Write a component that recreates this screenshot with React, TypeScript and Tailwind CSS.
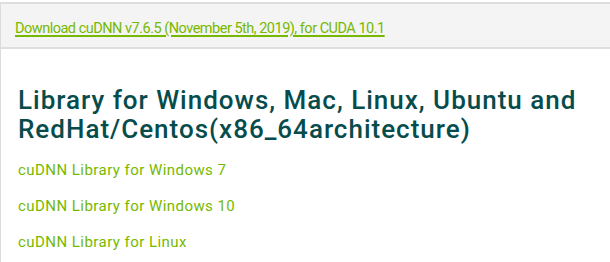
import React from "react";

export default function App() {
  return (
    <div className="w-[610px] h-[262px] overflow-hidden bg-white pt-[2px]" style={{ fontFamily: "Roboto, 'Liberation Sans', sans-serif" }}>
      <div className="border-l border-[#dcdcdc] h-full">
        <div className="bg-[#f4f4f4] border-y-2 border-[#dedede] h-[47px] pl-[14px] pt-[12px]">
          <a href="#" className="text-[14.5px] leading-[20px] tracking-[-0.5px] text-[#76b900] underline decoration-[#76b900] underline-offset-[2px] decoration-[1.5px]">
            Download cuDNN v7.6.5 (November 5th, 2019), for CUDA 10.1
          </a>
        </div>
        <div className="pl-[17px] pt-[37px]">
          <h2 className="text-[26px] leading-[29px] tracking-[1px] font-medium text-[#074c4c]">
            Library for Windows, Mac, Linux, Ubuntu and
            <br />
            RedHat/Centos(x86_64architecture)
          </h2>
          <div className="flex flex-col gap-[15px] mt-[16px] text-[15px] leading-[21px] tracking-[0.45px] text-[#76b900]">
            <a href="#">cuDNN Library for Windows 7</a>
            <a href="#">cuDNN Library for Windows 10</a>
            <a href="#">cuDNN Library for Linux</a>
          </div>
        </div>
      </div>
    </div>
  );
}
